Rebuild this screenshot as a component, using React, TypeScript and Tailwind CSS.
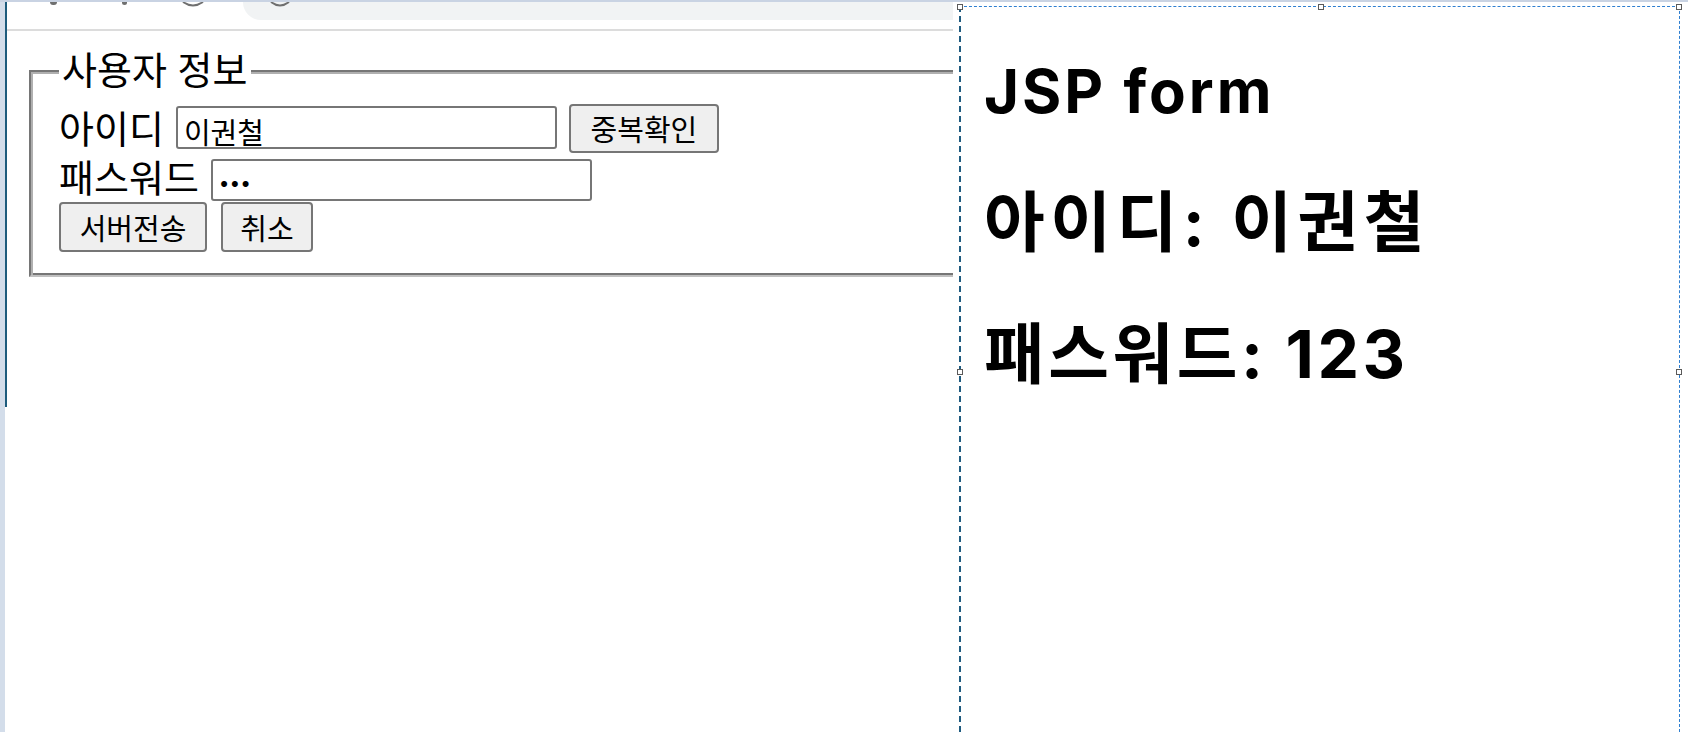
function ChromeBar() {
  return (
    <div className="h-[27px] shrink-0 flex items-start">
      <div className="ml-[43px] w-[7px] h-[3px] rounded-b-[3px] bg-[#6f6f6f]" />
      <div className="ml-[65px] w-[5px] h-[3px] rounded-b-[3px] bg-[#6f6f6f]" />
      <svg className="ml-[55px]" width="22" height="5" viewBox="0 0 22 5">
        <path d="M1 0 Q11 7 21 0" fill="none" stroke="#6f6f6f" strokeWidth="2" />
      </svg>
      <div className="ml-[39px] flex-1 h-[18px] rounded-bl-[18px] bg-[#f1f3f4] flex items-start">
        <svg className="ml-[27px]" width="20" height="5" viewBox="0 0 20 5">
          <path d="M1 0 Q10 7 19 0" fill="none" stroke="#6f6f6f" strokeWidth="2" />
        </svg>
      </div>
    </div>
  );
}

function UserForm() {
  const inputClass =
    'border-2 border-[#767676] rounded-[3px] bg-white px-[6px] pt-[6px] leading-[33px] outline-none';
  const buttonClass =
    'flex items-center justify-center bg-[#efefef] border-2 border-[#767676] rounded-[4px] pt-[4px] text-[29px] leading-[33px] whitespace-nowrap';

  return (
    <fieldset className="ml-[22px] mt-[18px] w-[960px] border-2 border-t-[#767676] border-l-[#767676] border-b-[#c0c0c0] border-r-[#c0c0c0] shadow-[inset_2px_2px_0_#b0b0b0,inset_-2px_-2px_0_#767676] pl-[28px] pt-[12px] pb-[23px]">
      <legend className="px-[3px] bg-white text-[38px] leading-[43px] whitespace-nowrap">사용자 정보</legend>
      <div className="flex items-start h-[50px]">
        <span className="text-[38px] leading-[50px] whitespace-nowrap">아이디</span>
        <input type="text" readOnly defaultValue="이권철" className={`${inputClass} text-[29px] ml-[12px] mt-[2px] w-[381px] h-[43px]`} />
        <button type="button" className={`${buttonClass} ml-[12px] w-[150px] h-[49px]`}>중복확인</button>
      </div>
      <div className="flex items-start h-[48px]">
        <span className="text-[38px] leading-[48px] whitespace-nowrap">패스워드</span>
        <input type="password" readOnly defaultValue="123" className={`${inputClass} text-[19px] ml-[12px] mt-[5px] w-[381px] h-[42px]`} />
      </div>
      <div className="flex items-start h-[50px]">
        <button type="button" className={`${buttonClass} w-[148px] h-[50px]`}>서버전송</button>
        <button type="button" className={`${buttonClass} ml-[14px] w-[92px] h-[50px]`}>취소</button>
      </div>
    </fieldset>
  );
}

function Handle({ className }: { className: string }) {
  return <div className={`absolute w-[6px] h-[6px] border border-[#5a5a5a] bg-white ${className}`} />;
}

function ResultPanel() {
  return (
    <div className="relative mt-[4px] w-[721px] shrink-0 flex flex-col border-t border-r border-l-2 border-dashed border-t-[#2f7fd0] border-r-[#2f7fd0] border-l-[#1f5b80] pl-[23px] pt-[44px] font-bold">
      <Handle className="-left-[4px] -top-[3px]" />
      <Handle className="left-[357px] -top-[3px]" />
      <Handle className="-right-[3px] -top-[3px]" />
      <Handle className="-left-[4px] top-[362px]" />
      <Handle className="-right-[3px] top-[362px]" />
      <h1 className="text-[60px] leading-[80px] h-[80px] tracking-[3px] whitespace-nowrap">JSP form</h1>
      <h1 className="mt-[51px] text-[66px] leading-[80px] h-[80px] tracking-[5.5px] whitespace-nowrap">아이디: 이권철</h1>
      <h1 className="mt-[52px] text-[66px] leading-[80px] h-[80px] tracking-[3.5px] whitespace-nowrap">패스워드: 123</h1>
    </div>
  );
}

export default function App() {
  return (
    <div className="w-[1688px] h-[732px] overflow-hidden bg-white text-black flex flex-col font-['Inter','Noto_Sans_CJK_KR',sans-serif]">
      <div className="h-[2px] shrink-0 bg-[#c9d3e3]" />
      <div className="flex flex-1 min-h-0">
        <div className="w-[5px] shrink-0 bg-[#d3ddea]" />
        <div className="w-[2px] shrink-0 h-[405px] bg-[#1d5b7c]" />
        <div className="w-[946px] shrink-0 flex flex-col overflow-hidden">
          <ChromeBar />
          <div className="h-[2px] shrink-0 bg-[#dcdcdc]" />
          <UserForm />
        </div>
        <div className="w-[6px] shrink-0" />
        <ResultPanel />
        <div className="flex-1" />
      </div>
    </div>
  );
}
